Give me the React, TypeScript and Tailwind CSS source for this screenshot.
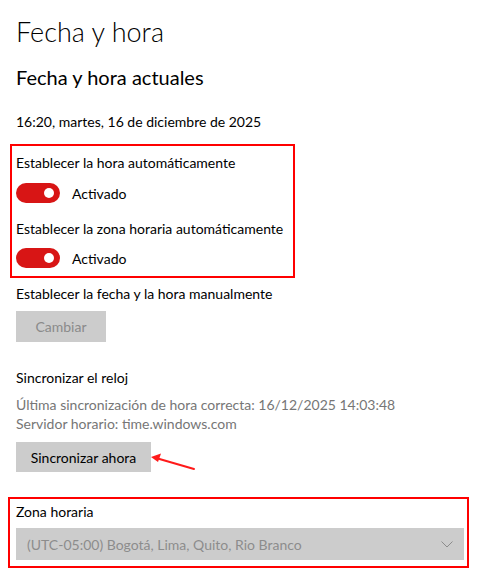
import React from "react";

const Toggle = () => (
  <div className="flex items-center h-[20px]">
    <div className="w-[44px] h-[20px] rounded-full bg-[#d81515] flex items-center justify-end pr-[6px]">
      <div className="w-[10px] h-[10px] rounded-full bg-white" />
    </div>
    <span className="ml-[12px] text-[14px] text-black">Activado</span>
  </div>
);

const Line = ({ children, className = "" }: { children: React.ReactNode; className?: string }) => (
  <div className={`h-[20px] leading-[20px] text-[14px] whitespace-nowrap ${className}`}>{children}</div>
);

const App = () => {
  return (
    <div
      className="w-[487px] h-[584px] bg-white pl-4 pt-[14px] relative text-black overflow-hidden"
      style={{ fontFamily: 'Lato, "Noto Sans", sans-serif' }}
    >
      <h1 className="h-[36px] leading-[36px] text-[27px] font-light">Fecha y hora</h1>
      <h2 className="mt-[13px] h-[28px] leading-[28px] text-[20px]">Fecha y hora actuales</h2>
      <Line className="mt-[21px]">16:20, martes, 16 de diciembre de 2025</Line>

      <div className="mt-[12px] -ml-[6px] w-[285px] border-2 border-[#ff0000] pl-[4px] pt-[7px] pb-[8px]">
        <Line>Establecer la hora automáticamente</Line>
        <div className="mt-[10px]">
          <Toggle />
        </div>
        <Line className="mt-[16px]">Establecer la zona horaria automáticamente</Line>
        <div className="mt-[9px]">
          <Toggle />
        </div>
      </div>

      <Line className="mt-[6px]">Establecer la fecha y la hora manualmente</Line>
      <button className="mt-[7px] w-[90px] h-[31px] bg-[#cccccc] text-[14px] text-[#8a8a8a]">Cambiar</button>

      <Line className="mt-[26px]">Sincronizar el reloj</Line>
      <div className="mt-[7px] text-[14px] text-[#767676] leading-[19px] whitespace-nowrap">
        <div>Última sincronización de hora correcta: 16/12/2025 14:03:48</div>
        <div>Servidor horario: time.windows.com</div>
      </div>
      <div className="relative mt-[9px] w-fit">
        <button className="w-[135px] h-[30px] bg-[#cccccc] text-[14px] text-black">Sincronizar ahora</button>
        <svg className="absolute left-[132px] top-[10px]" width="50" height="22" viewBox="0 0 50 22">
          <line x1="8" y1="6" x2="46" y2="17" stroke="#ff1a1a" strokeWidth="2" strokeLinecap="round" />
          <polygon points="3,5 13,1.5 10,10" fill="#ff1a1a" />
        </svg>
      </div>

      <div className="mt-[25px] -ml-[8px] w-[461px] border-2 border-[#ff0000] pl-[6px] pr-[3px] pt-[3px] pb-[6px]">
        <Line>Zona horaria</Line>
        <div className="mt-[6px] h-[32px] bg-[#cccccc] flex items-center justify-between pl-[11px] pr-[11px]">
          <span className="text-[14px] text-[#8c8c8c]">(UTC-05:00) Bogotá, Lima, Quito, Rio Branco</span>
          <svg width="12" height="7" viewBox="0 0 12 7">
            <polyline points="0.5,0.5 6,6 11.5,0.5" fill="none" stroke="#8c8c8c" strokeWidth="1" />
          </svg>
        </div>
      </div>
    </div>
  );
};

export default App;
